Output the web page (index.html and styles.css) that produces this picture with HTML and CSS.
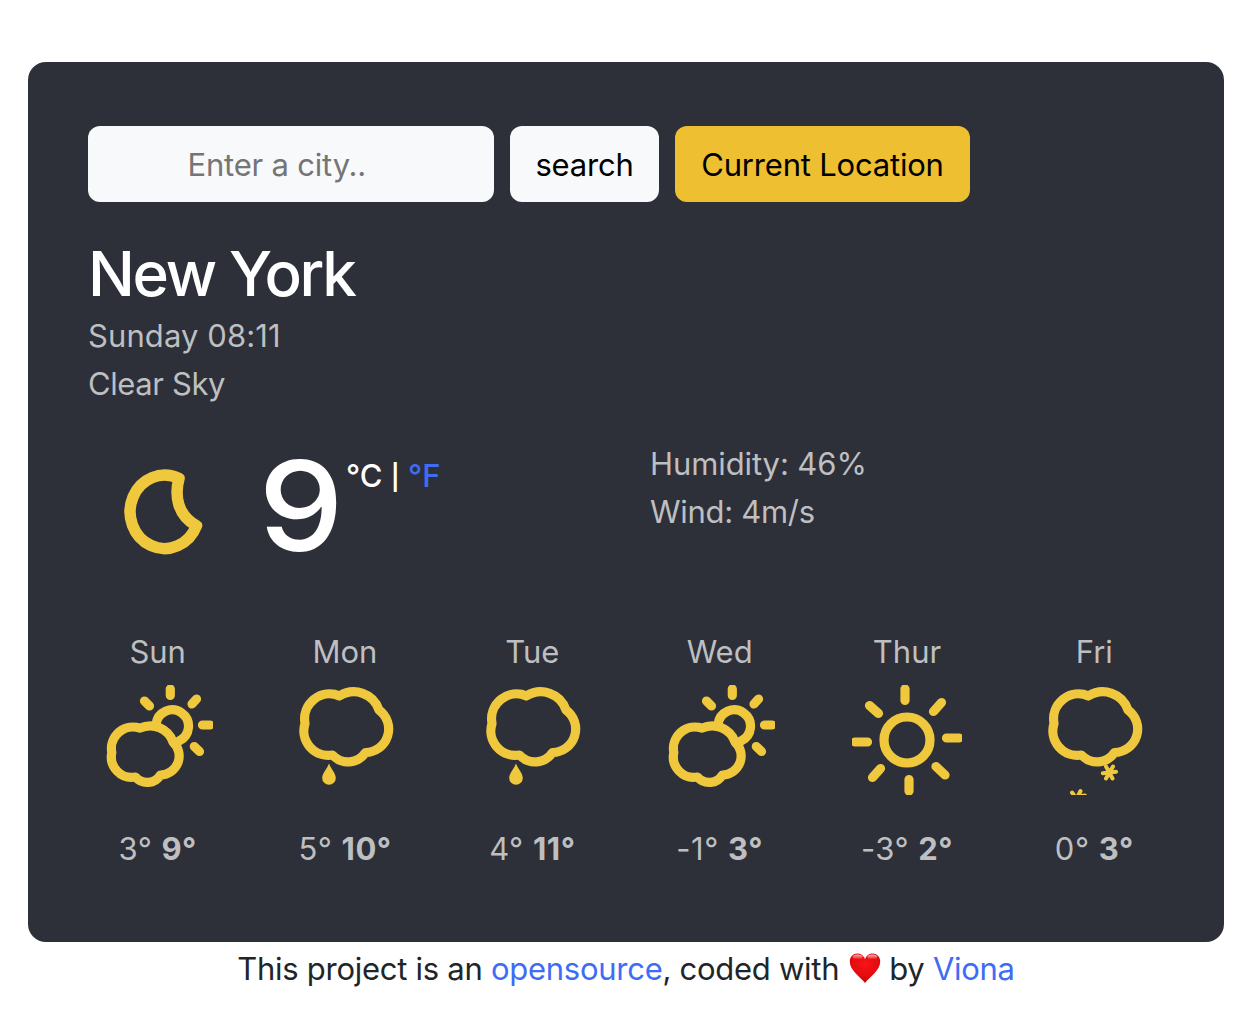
FILE: index.html
```html
<!DOCTYPE html>
<html lang="en">
<head>
<meta charset="utf-8">
<title>Weather</title>
<link rel="stylesheet" href="styles.css">
</head>
<body>
<svg class="defs" width="0" height="0" aria-hidden="true">
  <symbol id="cloud" viewBox="0 0 110 110">
    <path d="M15 38.500A25 25 0 0 1 49.500 11A26.500 26.500 0 0 1 89 25A23.500 23.500 0 0 1 75.500 67.500A21 21 0 0 1 42.500 70A24.500 24.500 0 0 1 15 38.500Z"/>
  </symbol>
  <symbol id="rain" viewBox="0 0 110 110">
    <use href="#cloud"/>
    <path class="fill" d="M39 78.500C41 84 45.800 88 45.800 93A6.800 6.800 0 0 1 32.200 93C32.200 88 37 84 39 78.500Z"/>
  </symbol>
  <symbol id="partly" viewBox="0 0 110 110">
    <path d="M8.800 67.500A21.500 21.500 0 0 1 37 43.200A24 24 0 0 1 70 57A19 19 0 0 1 57.500 90A15.500 15.500 0 0 1 32.500 92A20.500 20.500 0 0 1 8.800 67.500Z"/>
    <path d="M53 39.500A16.300 16.300 0 1 1 76 56M67.300 4V10.500M41.500 16L46.500 21M93.500 14L89 19M99.500 40H107M91.300 61.500L96.500 66.500"/>
  </symbol>
  <symbol id="sun" viewBox="0 0 110 110">
    <circle cx="55" cy="55" r="23"/>
    <path d="M53 4V15.500M57 94.500V106M94.500 53H107M3 57H15.500M89.500 17.500L81.500 26.500M17.500 20.500L26.500 28.500M28.500 83.500L20.500 92.500M84 81.500L93 90"/>
  </symbol>
  <symbol id="snow" viewBox="0 0 110 110">
    <use href="#cloud"/>
    <path class="flake" d="M63.800 88.300L77 86.800M67 81.500L73.500 93.500M74 81.500L67 93.500M33 107.500L40 117M41.500 106L36 117M33 112L46 110.500"/>
  </symbol>
</svg>
<main class="card">
  <form class="search">
    <input class="field" type="text" placeholder="Enter a city..">
    <button class="btn btn-search" type="button">search</button>
    <button class="btn btn-location" type="button">Current Location</button>
  </form>
  <h1 class="city">New York</h1>
  <div class="muted when">Sunday 08:11</div>
  <div class="muted sky">Clear Sky</div>
  <section class="current">
    <div class="now">
      <svg class="moon" viewBox="0 0 110 110"><path d="M71 21.500A34.500 36.700 0 1 0 88.500 68.800C69 58 66.500 38 71 21.500Z"/></svg>
      <strong class="temp">9</strong>
      <span class="units">°C <span class="bar">|</span> <a class="link">°F</a></span>
    </div>
    <div class="muted details">
      <div class="humidity">Humidity: 46%</div>
      <div class="wind">Wind: 4m/s</div>
    </div>
  </section>
  <section class="forecast muted">
    <div class="day"><span>Sun</span><svg class="icon"><use href="#partly"/></svg><span class="range">3° <b>9°</b></span></div>
    <div class="day"><span>Mon</span><svg class="icon"><use href="#rain"/></svg><span class="range">5° <b>10°</b></span></div>
    <div class="day"><span>Tue</span><svg class="icon"><use href="#rain"/></svg><span class="range">4° <b>11°</b></span></div>
    <div class="day"><span>Wed</span><svg class="icon"><use href="#partly"/></svg><span class="range">-1° <b>3°</b></span></div>
    <div class="day"><span>Thur</span><svg class="icon"><use href="#sun"/></svg><span class="range">-3° <b>2°</b></span></div>
    <div class="day"><span>Fri</span><svg class="icon"><use href="#snow"/></svg><span class="range">0° <b>3°</b></span></div>
  </section>
</main>
<footer class="footer">This project is an <a class="link">opensource</a>, coded with <svg class="heart" viewBox="0 0 32 32">
  <defs>
    <radialGradient id="red" cx=".5" cy=".35" r=".7"><stop offset="0" stop-color="#f6141a"/><stop offset=".6" stop-color="#e50b0f"/><stop offset="1" stop-color="#b00608"/></radialGradient>
    <linearGradient id="shine" x2="0" y2="1"><stop offset="0" stop-color="#fff" stop-opacity=".75"/><stop offset="1" stop-color="#fff" stop-opacity="0"/></linearGradient>
  </defs>
  <path fill="url(#red)" d="M16 31C11 24.500 .8 18.500 .8 9.500C.8 4.500 4.300 1.500 8.500 1.500C12 1.500 14.800 3.500 16 7C17.200 3.500 20 1.500 23.500 1.500C27.700 1.500 31.200 4.500 31.200 9.500C31.200 18.500 21 24.500 16 31Z"/>
  <ellipse cx="8.600" cy="4.900" rx="5" ry="2.500" fill="url(#shine)"/>
  <ellipse cx="23.400" cy="4.900" rx="5" ry="2.500" fill="url(#shine)"/>
</svg> by <a class="link">Viona</a></footer>
</body>
</html>
```
FILE: styles.css
```css
* { box-sizing: border-box; }
body {
  margin: 0;
  padding: 62px 30px 0 28px;
  background: #fff;
  color: #212529;
  font-family: Inter, "Liberation Sans", sans-serif;
  font-size: 31px;
  line-height: 48px;
}
.defs { display: block; height: 0; }
.card {
  height: 880px;
  padding: 64px 36px 0;
  border-radius: 18px;
  background: #2d3038;
}
.search { display: flex; gap: 16px; margin: 0 24px 33px; }
.field, .btn {
  height: 76px;
  padding: 2px 0 0;
  border: 0;
  border-radius: 12px;
  background: #f8f9fb;
  color: #000;
  font: inherit;
  letter-spacing: -0.2px;
}
.field { width: 406px; padding: 0 99.5px; letter-spacing: -0.2px; }
.field::placeholder { color: #757575; opacity: 1; }
.btn-search { width: 149px; }
.btn-location { width: 295px; background: #eebf30; }
.city {
  margin: 0 24px;
  color: #fff;
  font-size: 62px;
  font-weight: 500;
  line-height: 77px;
  letter-spacing: -2.3px;
}
.muted { color: #bebfc1; }
.when, .sky { margin: 0 24px; }
.when { letter-spacing: 0.1px; }
.sky { letter-spacing: -0.4px; }
.current { display: flex; height: 220px; padding-top: 32px; margin: 0 24px; }
.now { display: flex; width: 562px; }
.moon { width: 110px; height: 110px; margin: 17px 0 0 20px; stroke-width: 11.5; }
.moon, .icon { fill: none; stroke: #f0c83e; stroke-linecap: round; stroke-linejoin: round; }
.icon { width: 110px; height: 110px; margin: 9px 0 30px; stroke-width: 9.2; overflow: hidden; }
.fill { fill: #f0c83e; stroke: none; }
.flake { stroke-width: 4; }
.temp {
  width: 82px;
  margin-left: 41px;
  color: #fff;
  font-size: 125px;
  font-weight: 500;
  line-height: 132px;
  transform: scaleX(1.08);
  transform-origin: 5px 50%;
}
.units { margin: 12px 0 0 5px; color: #fff; font-weight: 450; white-space: nowrap; }
.bar { font-size: 25px; font-weight: 600; vertical-align: 1px; line-height: 1; }
.humidity { letter-spacing: -0.1px; }
.wind { letter-spacing: -0.3px; }
.link { color: #3f6cf5; }
.forecast { display: grid; grid-template-columns: repeat(6, 1fr); }
.day { display: flex; flex-direction: column; align-items: center; }
.range { letter-spacing: 0.5px; }
.footer { padding-top: 3px; text-align: center; white-space: nowrap; letter-spacing: -0.27px; }
.heart { width: 32px; height: 32px; margin: 0 0 0 1px; vertical-align: -4px; }
```
